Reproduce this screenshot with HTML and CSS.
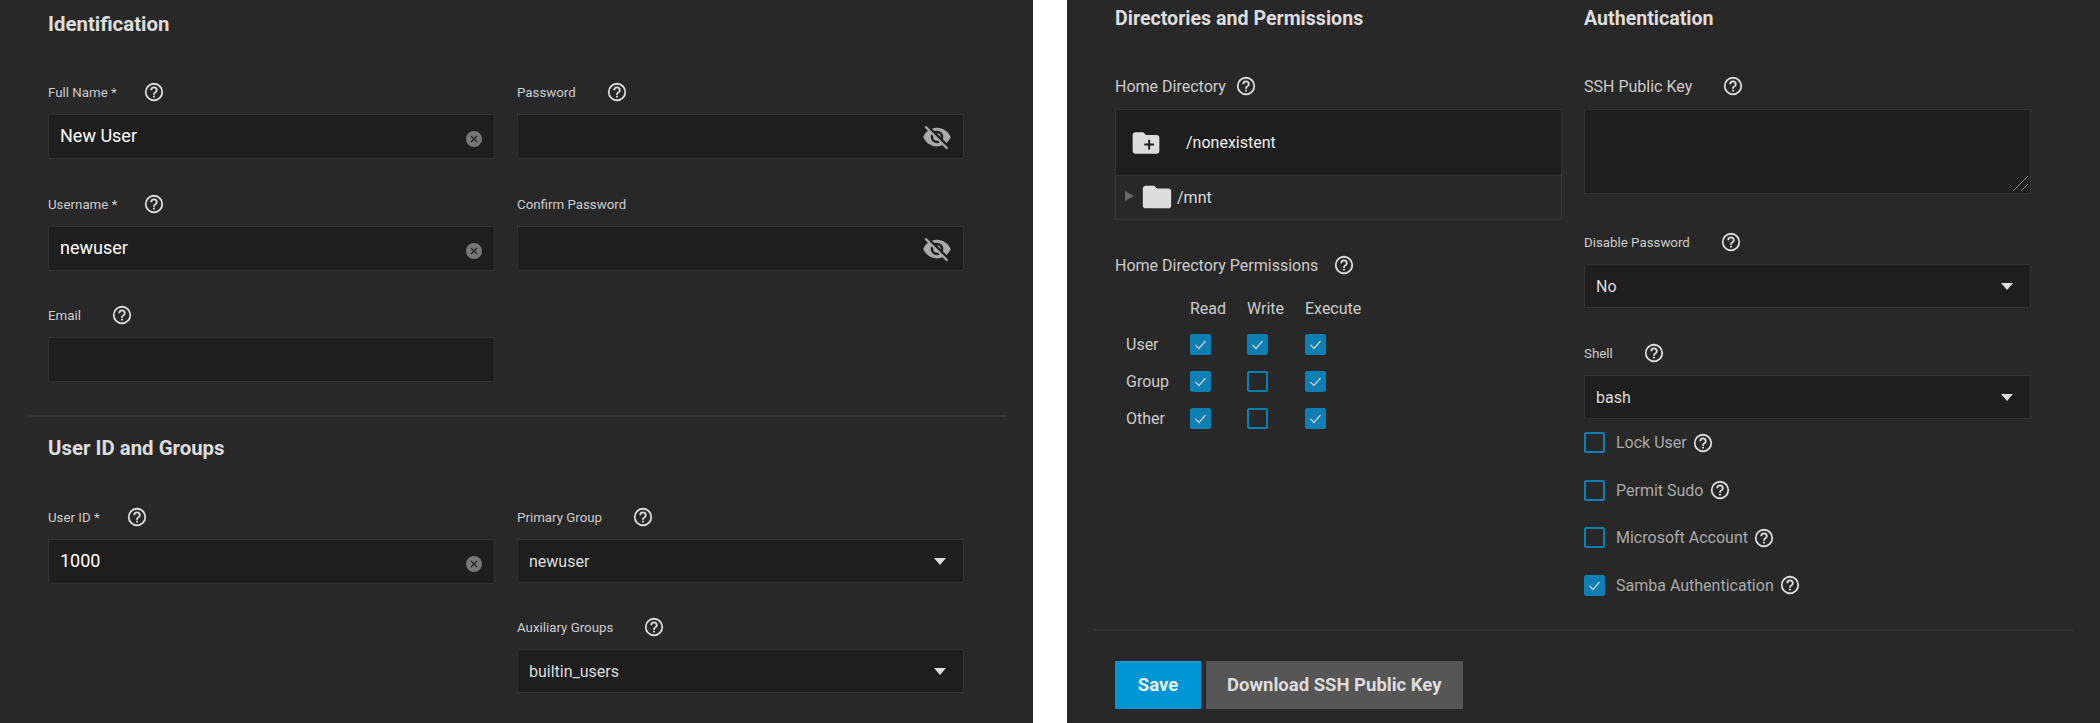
FILE: index.html
```html
<!DOCTYPE html>
<html>

<head>
  <title>Add User</title>
  <link rel="stylesheet" href="styles.css">
</head>

<body>
  <svg class="sprite" width="0" height="0">
    <symbol id="help" viewBox="0 0 24 24"><path d="M11,18H13V16H11V18M12,2A10,10 0 0,0 2,12A10,10 0 0,0 12,22A10,10 0 0,0 22,12A10,10 0 0,0 12,2M12,20C7.59,20 4,16.41 4,12C4,7.59 7.59,4 12,4C16.41,4 20,7.59 20,12C20,16.41 16.41,20 12,20M12,6A4,4 0 0,0 8,10H10A2,2 0 0,1 12,8A2,2 0 0,1 14,10C14,12 11,11.75 11,15H13C13,12.75 16,12.5 16,10A4,4 0 0,0 12,6Z"/></symbol>
    <symbol id="eye-off" viewBox="0 0 24 24"><path d="M11.83,9L15,12.16C15,12.11 15,12.05 15,12A3,3 0 0,0 12,9C11.94,9 11.89,9 11.83,9M7.53,9.8L9.08,11.35C9.03,11.56 9,11.77 9,12A3,3 0 0,0 12,15C12.22,15 12.44,14.97 12.65,14.92L14.2,16.47C13.53,16.8 12.79,17 12,17A5,5 0 0,1 7,12C7,11.21 7.2,10.47 7.53,9.8M2,4.27L4.28,6.55L4.73,7C3.08,8.3 1.78,10 1,12C2.73,16.39 7,19.5 12,19.5C13.55,19.5 15.03,19.2 16.38,18.66L16.81,19.08L19.73,22L21,20.73L3.27,3M12,7A5,5 0 0,1 17,12C17,12.64 16.87,13.26 16.64,13.82L19.57,16.75C21.07,15.5 22.27,13.86 23,12C21.27,7.61 17,4.5 12,4.5C10.6,4.5 9.26,4.75 8,5.2L10.17,7.35C10.74,7.13 11.35,7 12,7Z"/></symbol>
    <symbol id="clear" viewBox="0 0 16 16"><circle cx="8" cy="8" r="8" fill="#777"/><path d="M5 5L11 11M11 5L5 11" stroke="#222" stroke-width="1.2" fill="none"/></symbol>
    <symbol id="check" viewBox="0 0 21 21"><path d="M5.5 11L9 14.5L15.5 7" stroke="#ccc" stroke-width="1.3" fill="none"/></symbol>
    <symbol id="folder" viewBox="0 0 24 24"><path d="M10,4H4C2.89,4 2,4.89 2,6V18A2,2 0 0,0 4,20H20A2,2 0 0,0 22,18V8C22,6.89 21.1,6 20,6H12L10,4Z"/></symbol>
    <symbol id="folder-plus" viewBox="0 0 24 24"><path fill-rule="evenodd" d="M10,4L12,6H20A2,2 0 0,1 22,8V18A2,2 0 0,1 20,20H4C2.89,20 2,19.1 2,18V6C2,4.89 2.89,4 4,4H10M13.6,9.5V12.4H10.7V13.9H13.6V16.8H15.1V13.9H18V12.4H15.1V9.5H13.6Z"/></symbol>
  </svg>

  <div class="card">
    <div class="section">
      <h3 class="first">Identification</h3>
      <div class="two-col">
        <div class="field">
          <div class="label"><span>Full Name *</span><svg class="help req"><use href="#help"/></svg></div>
          <div class="box"><span class="value">New User</span><svg class="clear"><use href="#clear"/></svg></div>
        </div>
        <div class="field">
          <div class="label"><span>Password</span><svg class="help"><use href="#help"/></svg></div>
          <div class="box"><svg class="eye"><use href="#eye-off"/></svg></div>
        </div>
        <div class="field">
          <div class="label"><span>Username *</span><svg class="help req"><use href="#help"/></svg></div>
          <div class="box"><span class="value">newuser</span><svg class="clear"><use href="#clear"/></svg></div>
        </div>
        <div class="field">
          <div class="label"><span>Confirm Password</span></div>
          <div class="box"><svg class="eye"><use href="#eye-off"/></svg></div>
        </div>
        <div class="field email">
          <div class="label"><span>Email</span><svg class="help"><use href="#help"/></svg></div>
          <div class="box"></div>
        </div>
      </div>
    </div>
    <hr class="divider">
    <div class="section">
      <h3>User ID and Groups</h3>
      <div class="two-col">
        <div class="field">
          <div class="label"><span>User ID *</span><svg class="help req"><use href="#help"/></svg></div>
          <div class="box"><span class="value">1000</span><svg class="clear"><use href="#clear"/></svg></div>
        </div>
        <div class="field">
          <div class="label"><span>Primary Group</span><svg class="help"><use href="#help"/></svg></div>
          <div class="box select"><span>newuser</span><i class="arrow"></i></div>
        </div>
        <div class="field col-2">
          <div class="label"><span>Auxiliary Groups</span><svg class="help"><use href="#help"/></svg></div>
          <div class="box select"><span>builtin_users</span><i class="arrow"></i></div>
        </div>
      </div>
    </div>
  </div>

  <div class="card">
    <div class="section two-col">
      <div>
        <h3 class="top">Directories and Permissions</h3>
        <div class="label big"><span>Home Directory</span><svg class="help near"><use href="#help"/></svg></div>
        <div class="tree">
          <div class="tree-input">
            <svg class="folder-plus"><use href="#folder-plus"/></svg>
            <span>/nonexistent</span>
          </div>
          <div class="tree-node">
            <i class="expand"></i>
            <svg class="folder"><use href="#folder"/></svg>
            <span>/mnt</span>
          </div>
        </div>
        <div class="label big perm-label"><span>Home Directory Permissions</span><svg class="help mid"><use href="#help"/></svg></div>
        <div class="perms">
          <span></span><span>Read</span><span>Write</span><span>Execute</span>
          <span>User</span>
          <span class="check on"><svg><use href="#check"/></svg></span>
          <span class="check on"><svg><use href="#check"/></svg></span>
          <span class="check on"><svg><use href="#check"/></svg></span>
          <span>Group</span>
          <span class="check on"><svg><use href="#check"/></svg></span>
          <span class="check"></span>
          <span class="check on"><svg><use href="#check"/></svg></span>
          <span>Other</span>
          <span class="check on"><svg><use href="#check"/></svg></span>
          <span class="check"></span>
          <span class="check on"><svg><use href="#check"/></svg></span>
        </div>
      </div>
      <div>
        <h3 class="top">Authentication</h3>
        <div class="label big"><span>SSH Public Key</span><svg class="help"><use href="#help"/></svg></div>
        <div class="box textarea">
          <svg class="grip" width="15" height="15"><path d="M0 15L15 0M8 15L15 8" stroke="#bbb" stroke-width="0.7" fill="none"/></svg>
        </div>
        <div class="field after-text">
          <div class="label"><span>Disable Password</span><svg class="help"><use href="#help"/></svg></div>
          <div class="box select"><span>No</span><i class="arrow"></i></div>
        </div>
        <div class="field after-select">
          <div class="label"><span>Shell</span><svg class="help"><use href="#help"/></svg></div>
          <div class="box select"><span>bash</span><i class="arrow"></i></div>
        </div>
        <div class="options">
          <div class="option"><span class="check"></span><span>Lock User</span><svg class="help tight"><use href="#help"/></svg></div>
          <div class="option"><span class="check"></span><span>Permit Sudo</span><svg class="help tight"><use href="#help"/></svg></div>
          <div class="option"><span class="check"></span><span>Microsoft Account</span><svg class="help tight"><use href="#help"/></svg></div>
          <div class="option"><span class="check on"><svg><use href="#check"/></svg></span><span>Samba Authentication</span><svg class="help tight"><use href="#help"/></svg></div>
        </div>
      </div>
    </div>
    <hr class="divider foot">
    <div class="section buttons">
      <button class="btn primary">Save</button>
      <button class="btn">Download SSH Public Key</button>
    </div>
  </div>
</body>

</html>
```
FILE: styles.css
```css
html, body {
  height: 723px;
  overflow: hidden;
}

body {
  margin: 0;
  background-color: #fff;
  display: flex;
  justify-content: space-between;
  font-family: Roboto, "Liberation Sans", sans-serif;
  color: #ccc;
}

.sprite {
  position: absolute;
}

.card {
  width: 1033px;
  height: 723px;
  padding: 0 27px;
  box-sizing: border-box;
  background-color: #282828;
}

.section {
  padding: 0 21px;
}

h3 {
  margin: 19px 0 46px;
  font-size: 20.4px;
  line-height: 24px;
  font-weight: 700;
  color: #ddd;
}

h3.first {
  margin-top: 12px;
  margin-bottom: 45px;
}

h3.top {
  margin-top: 7px;
  margin-bottom: 45px;
  font-size: 19.6px;
}

.two-col {
  display: grid;
  grid-template-columns: 447px 447px;
  column-gap: 22px;
  row-gap: 34px;
  align-items: start;
}

.section.two-col {
  row-gap: 0;
}

.col-2 {
  grid-column: 2;
  margin-top: -2px;
}

.email {
  margin-top: -1px;
}

.label {
  display: flex;
  align-items: center;
  height: 22px;
  margin-bottom: 11px;
  font-size: 13.3px;
  color: #ccc;
}

.label.big {
  box-sizing: border-box;
  padding-bottom: 2px;
  font-size: 16px;
}

.label.perm-label {
  margin-top: 34px;
  margin-bottom: 0;
  padding-bottom: 0;
}

.help {
  width: 22px;
  height: 22px;
  margin-left: 30px;
  fill: #ddd;
  flex: none;
}

.help.req {
  margin-left: 26px;
}

.help.near {
  margin-left: 9px;
}

.help.mid {
  margin-left: 15px;
}

.help.tight {
  margin-left: 5px;
}

.box {
  position: relative;
  display: flex;
  align-items: center;
  height: 45px;
  padding: 0 11px;
  box-sizing: border-box;
  background-color: #1e1e1e;
  border: 1px solid #333;
}

.value {
  margin-top: -2px;
  font-size: 18px;
  color: #fff;
}

.select {
  height: 44px;
  justify-content: space-between;
  font-size: 16px;
  color: #ddd;
}

.textarea {
  height: 85px;
}

.grip {
  position: absolute;
  right: 2px;
  bottom: 2px;
}

.clear {
  width: 16px;
  height: 16px;
  margin-left: auto;
  margin-right: 1px;
  margin-top: 4px;
}

.eye {
  width: 30px;
  height: 30px;
  margin-left: auto;
  fill: #aaa;
}

.arrow {
  width: 0;
  height: 0;
  margin-right: 6px;
  border-left: 6px solid transparent;
  border-right: 6px solid transparent;
  border-top: 7px solid #ddd;
}

.tree {
  height: 111px;
  box-sizing: border-box;
  border: 1px solid #333;
}

.tree-input {
  display: flex;
  align-items: center;
  height: 65px;
  background-color: #1e1e1e;
  border-bottom: 1px solid #333;
  font-size: 16px;
  color: #eee;
}

.folder-plus {
  width: 32px;
  height: 32px;
  margin-left: 14px;
  margin-right: 24px;
  fill: #ddd;
}

.tree-node {
  display: flex;
  align-items: center;
  height: 42px;
  font-size: 16px;
  color: #ddd;
}

.expand {
  width: 0;
  height: 0;
  margin-left: 9px;
  margin-right: 6px;
  margin-bottom: 2px;
  border-top: 5px solid transparent;
  border-bottom: 5px solid transparent;
  border-left: 9px solid #666;
}

.folder {
  width: 34px;
  height: 34px;
  margin-right: 3px;
  fill: #ddd;
}

.perms {
  display: grid;
  grid-template-columns: 64px 57px 58px auto;
  grid-auto-rows: 36.6px;
  align-items: center;
  margin-top: 14px;
  padding-left: 11px;
  font-size: 16px;
  color: #ccc;
}

.check {
  display: block;
  width: 21px;
  height: 21px;
  box-sizing: border-box;
  border: 2px solid #0e7fb3;
  border-radius: 2px;
}

.check.on {
  background-color: #0e7fb3;
}

.check svg {
  display: block;
  width: 21px;
  height: 21px;
  margin: -2px;
}

.after-text {
  margin-top: 37px;
}

.after-select {
  margin-top: 34px;
}

.options {
  display: flex;
  flex-direction: column;
  gap: 26.6px;
  margin-top: 13px;
}

.option {
  display: flex;
  align-items: center;
  height: 21px;
  font-size: 16px;
  color: #aaa;
}

.option .check {
  margin-right: 11px;
}

.divider {
  height: 2px;
  margin: 33px 0 0;
  border: 0;
  background-color: #333;
}

.foot {
  margin-top: 33px;
}

.buttons {
  display: flex;
  gap: 5px;
  margin-top: 30px;
}

.btn {
  height: 48px;
  padding: 0 21px;
  border: 0;
  background-color: #565656;
  color: #ddd;
  font-family: inherit;
  font-size: 18.5px;
  font-weight: 700;
}

.primary {
  min-width: 86px;
  background-color: #0095d5;
  color: #e6f6fd;
}
```
